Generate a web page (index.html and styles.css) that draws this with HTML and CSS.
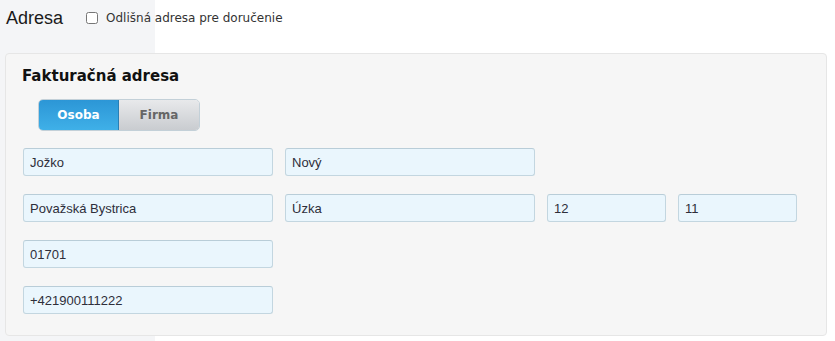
FILE: index.html
```html
<!DOCTYPE html>
<html lang="sk">
<head>
    <meta charset="UTF-8">
    <meta name="viewport" content="width=device-width, initial-scale=1.0">
    <title>Adresa</title>
    <link rel="stylesheet" href="styles.css">
</head>
<body>

<div class="page">
    <div class="section-head">
        <h1>Adresa</h1>
        <label class="check">
            <input type="checkbox" name="other-address">
            <span>Odlišná adresa pre doručenie</span>
        </label>
    </div>

    <div class="panel">
        <h2>Fakturačná adresa</h2>

        <div class="toggle">
            <button type="button" class="toggle-btn active">Osoba</button>
            <button type="button" class="toggle-btn">Firma</button>
        </div>

        <div class="row">
            <input type="text" class="field wide" value="Jožko">
            <input type="text" class="field wide" value="Nový">
        </div>

        <div class="row">
            <input type="text" class="field wide" value="Považská Bystrica">
            <input type="text" class="field wide" value="Úzka">
            <input type="text" class="field narrow" value="12">
            <input type="text" class="field narrow" value="11">
        </div>

        <div class="row">
            <input type="text" class="field wide" value="01701">
        </div>

        <div class="row">
            <input type="text" class="field wide" value="+421900111222">
        </div>
    </div>
</div>

</body>
</html>
```

FILE: styles.css
```css
* {
    margin: 0;
    padding: 0;
    box-sizing: border-box;
}

body {
    font-family: "DejaVu Sans", Verdana, sans-serif;
    background: linear-gradient(to right, #f4f5f7 155px, #ffffff 155px);
    height: 100vh;
    color: #222;
}

.page {
    padding: 0 8px 0 5px;
}

.section-head {
    display: flex;
    align-items: center;
    height: 36px;
    padding-left: 1px;
}

h1 {
    font-family: "Liberation Sans", Arial, sans-serif;
    font-weight: normal;
    font-size: 18px;
    color: #1a1a1a;
    margin-right: 23px;
}

.check {
    display: flex;
    align-items: center;
    font-size: 12px;
    color: #333;
}

.check input {
    width: 12px;
    height: 12px;
    margin-right: 8px;
}

.panel {
    margin-top: 17px;
    background-color: #f6f6f6;
    border: 1px solid #e6e6e6;
    border-radius: 4px;
    padding: 13px 17px 21px 17px;
}

h2 {
    font-size: 15px;
    font-weight: bold;
    color: #111;
    margin-bottom: 14px;
    margin-left: -1px;
}

.toggle {
    display: inline-flex;
    margin-left: 15px;
    margin-bottom: 17px;
    border: 1px solid #c3d0d8;
    border-radius: 5px;
    overflow: hidden;
}

.toggle-btn {
    width: 80px;
    height: 30px;
    border: none;
    font-family: "DejaVu Sans", Verdana, sans-serif;
    font-size: 12px;
    font-weight: bold;
    cursor: pointer;
    color: #666;
    background: linear-gradient(to bottom, #e8e9eb, #c9ccd0);
}

.toggle-btn.active {
    color: #fff;
    background: linear-gradient(to bottom, #2c96d6, #3fb0e8);
    border-right: 1px solid #2a7fb4;
}

.row {
    display: flex;
    gap: 12px;
    margin-bottom: 18px;
}

.row:last-child {
    margin-bottom: 0;
}

.field {
    height: 28px;
    padding: 0 6px;
    background-color: #eaf6fd;
    border: 1px solid #c3d6e0;
    border-top-color: #b9cdd8;
    border-radius: 3px;
    font-family: "Liberation Sans", Arial, sans-serif;
    font-size: 13px;
    color: #2e2e3a;
}

.field.wide {
    width: 250px;
}

.field.narrow {
    width: 119px;
}
```
